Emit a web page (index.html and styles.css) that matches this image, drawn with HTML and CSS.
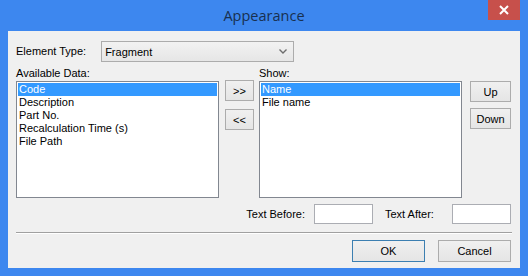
FILE: index.html
```html
<!DOCTYPE html>
<html>
<head>
  <meta charset="utf-8">
  <link rel="stylesheet" href="styles.css">
</head>
<body>
  <div class="window">
    <div class="titlebar">
      <span class="title">Appearance</span>
      <div class="close-btn">
        <svg width="10" height="10" viewBox="0 0 10 10">
          <path d="M1 1 L9 9 M9 1 L1 9" stroke="#fff" stroke-width="2"/>
        </svg>
      </div>
    </div>

    <div class="client">
      <div class="type-row">
        <span class="label">Element Type:</span>
        <div class="combo">
          <span>Fragment</span>
          <svg class="combo-arrow" width="8" height="5" viewBox="0 0 8 5">
            <path d="M0.5 0.5 L4 4 L7.5 0.5" stroke="#6d6d6d" stroke-width="1.4" fill="none"/>
          </svg>
        </div>
      </div>

      <div class="lists">
        <div class="col-left">
          <div class="label">Available Data:</div>
          <div class="listbox">
            <div class="item selected">Code</div>
            <div class="item">Description</div>
            <div class="item">Part No.</div>
            <div class="item">Recalculation Time (s)</div>
            <div class="item">File Path</div>
          </div>
        </div>

        <div class="col-move">
          <button class="btn move-btn">&gt;&gt;</button>
          <button class="btn move-btn">&lt;&lt;</button>
        </div>

        <div class="col-right">
          <div class="label">Show:</div>
          <div class="listbox">
            <div class="item selected">Name</div>
            <div class="item">File name</div>
          </div>
        </div>

        <div class="col-order">
          <button class="btn order-btn">Up</button>
          <button class="btn order-btn">Down</button>
        </div>
      </div>

      <div class="text-row">
        <span class="label">Text Before:</span>
        <div class="textbox"></div>
        <span class="label after-label">Text After:</span>
        <div class="textbox"></div>
      </div>

      <div class="separator"></div>

      <div class="footer">
        <button class="btn dlg-btn default">OK</button>
        <button class="btn dlg-btn">Cancel</button>
      </div>
    </div>
  </div>
</body>
</html>
```

FILE: styles.css
```css
body {
  margin: 0;
  font-family: "Liberation Sans", Arial, sans-serif;
  font-size: 11px;
  color: #000;
}

.window {
  width: 528px;
  height: 276px;
  background: #3d87ef;
  display: flex;
  flex-direction: column;
}

.titlebar {
  position: relative;
  height: 31px;
  flex: none;
  display: flex;
  align-items: center;
  justify-content: center;
}

.title {
  font-family: "Open Sans", "Noto Sans", sans-serif;
  font-size: 14.5px;
  color: #18304f;
  margin-top: -1px;
}

.close-btn {
  position: absolute;
  top: 0;
  left: 488px;
  width: 32px;
  height: 20px;
  background: #c7504b;
  display: flex;
  align-items: center;
  justify-content: center;
}

.client {
  flex: 1;
  margin: 0 8px 8px 8px;
  background: #f0f0f0;
  padding: 10px 8px 0 8px;
}

.label {
  line-height: 13px;
}

.type-row {
  display: flex;
  align-items: center;
  height: 21px;
}

.combo {
  margin-left: 15px;
  width: 188px;
  height: 19px;
  border: 1px solid #acacac;
  background: linear-gradient(#f2f2f2, #e6e6e6);
  display: flex;
  align-items: center;
  justify-content: space-between;
  padding: 0 0 0 3px;
}

.combo-arrow {
  margin-right: 6px;
}

.lists {
  display: flex;
  margin-top: 5px;
}

.col-left,
.col-right {
  width: 203px;
  display: flex;
  flex-direction: column;
}

.lists .label {
  height: 13px;
  margin-bottom: 1px;
}

.listbox {
  height: 113px;
  border: 1px solid #828790;
  background: #fff;
  padding: 1px;
}

.item {
  height: 13px;
  line-height: 13px;
  padding-left: 1px;
}

.item.selected {
  background: #3399ff;
  color: #fff;
}

.col-move {
  width: 29px;
  margin: 13px 5px 0 6px;
  display: flex;
  flex-direction: column;
  gap: 8px;
}

.col-order {
  width: 41px;
  margin: 14px 0 0 8px;
  display: flex;
  flex-direction: column;
  gap: 6px;
}

.btn {
  font-family: "Liberation Sans", Arial, sans-serif;
  font-size: 11px;
  color: #000;
  border: 1px solid #acacac;
  background: linear-gradient(#f0f0f0, #e5e5e5);
  padding: 0;
  margin: 0;
}

.move-btn {
  height: 21px;
}

.order-btn {
  height: 21px;
}

.text-row {
  display: flex;
  align-items: center;
  justify-content: flex-end;
  margin-top: 6px;
  padding-right: 1px;
}

.textbox {
  width: 57px;
  height: 18px;
  border: 1px solid #abadb3;
  background: #fff;
  margin-left: 9px;
}

.after-label {
  margin-left: 12px;
  width: 58px;
}

.separator {
  height: 1px;
  background: #a0a0a0;
  margin-top: 8px;
  border-bottom: 1px solid #fff;
}

.footer {
  display: flex;
  justify-content: flex-end;
  gap: 13px;
  margin-top: 6px;
  padding-right: 1px;
}

.dlg-btn {
  width: 73px;
  height: 22px;
}

.dlg-btn.default {
  border-color: #3c7fb1;
}
```
